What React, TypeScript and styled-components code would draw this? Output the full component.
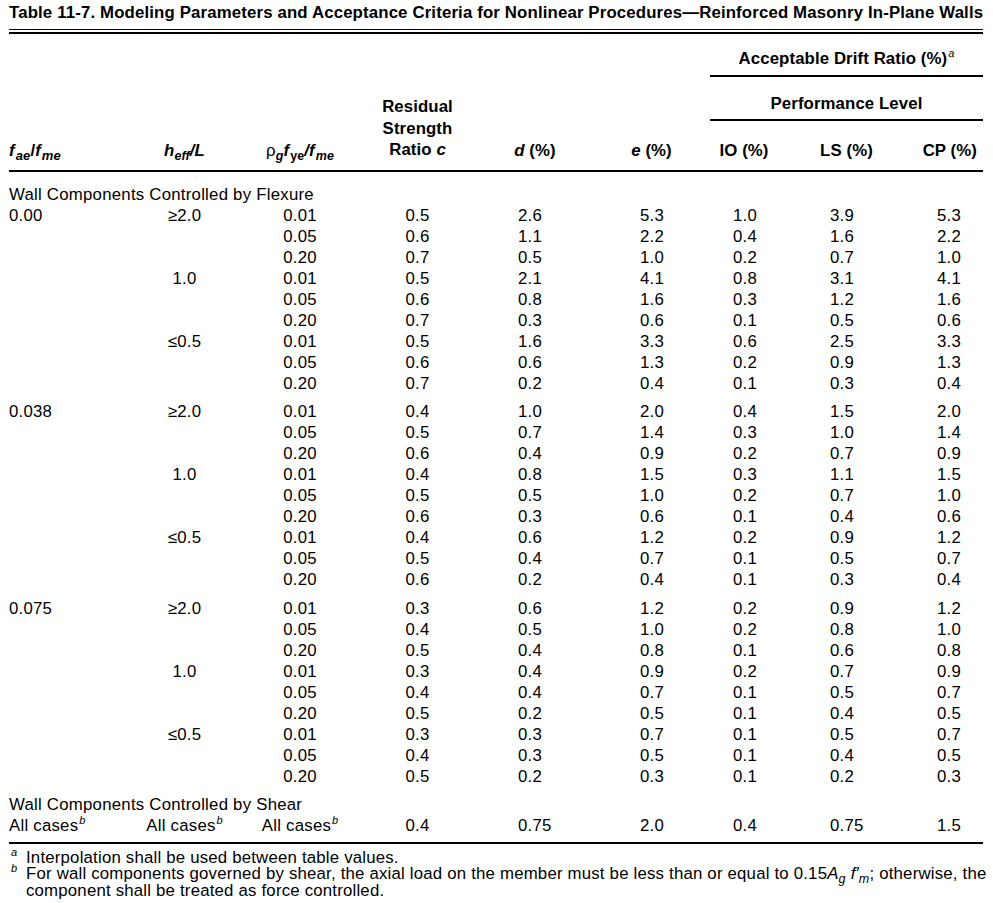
import React from 'react';
import styled, { createGlobalStyle } from 'styled-components';

const GlobalStyle = createGlobalStyle`
  html, body { margin: 0; padding: 0; background: #fff; }
  body { font-family: 'Liberation Sans', Arial, Helvetica, sans-serif; color: #000; }
`;

const COLS = '111px 129px 102px 133px 102px 131px 54px 151px 61px';
const FS = '16.8px';

type Align = 'left' | 'center' | 'right';
const DATA_ALIGN: { align: Align; pad: number }[] = [
  { align: 'left', pad: 0 },
  { align: 'center', pad: 0 },
  { align: 'center', pad: 0 },
  { align: 'center', pad: 0 },
  { align: 'left', pad: 34 },
  { align: 'left', pad: 54 },
  { align: 'left', pad: 16 },
  { align: 'left', pad: 59 },
  { align: 'left', pad: 15 },
];

const Page = styled.div`
  width: 974px;
  margin-left: 9px;
  font-size: ${FS};
  letter-spacing: 0.24px;
`;

const Title = styled.h1`
  margin: 0;
  font-size: ${FS};
  font-weight: bold;
  line-height: 26px;
  letter-spacing: 0.15px;
  white-space: nowrap;
`;

const DoubleRule = styled.div`
  margin-top: 3px;
  height: 2px;
  border-top: 1px solid #000;
  border-bottom: 2px solid #000;
`;

const HeaderGrid = styled.div`
  display: grid;
  grid-template-columns: ${COLS};
  grid-template-rows: auto auto;
  font-weight: bold;
  line-height: 21px;
  letter-spacing: 0.1px;
  border-bottom: 2px solid #000;
  padding-bottom: 9.5px;
`;

const ColLabel = styled.div<{ $col: number; $align?: Align; $padR?: number }>`
  grid-column: ${(p) => p.$col};
  grid-row: ${(p) => (p.$col >= 7 ? '2' : '1 / 3')};
  align-self: end;
  text-align: ${(p) => p.$align ?? 'center'};
  padding-right: ${(p) => p.$padR ?? 0}px;
  white-space: nowrap;
`;

const StackLabel = styled(ColLabel)`
  line-height: 21.5px;
`;

const GroupHead = styled.div`
  grid-column: 7 / 10;
  grid-row: 1;
  margin-left: -7px;
  padding-top: 13.5px;
  padding-bottom: 18.5px;
  display: flex;
  flex-direction: column;
  text-align: center;
`;

const GroupRule = styled.div<{ $top: number }>`
  height: 2px;
  background: #000;
  margin-top: ${(p) => p.$top}px;
`;

const GroupTitle = styled.div<{ $top?: number }>`
  margin-top: ${(p) => p.$top ?? 0}px;
  line-height: 21px;
`;

const Body = styled.div`
  padding-top: 11.5px;
  border-bottom: 2px solid #000;
  padding-bottom: 6px;
`;

const SectionLabel = styled.div<{ $gap?: number }>`
  margin-top: ${(p) => p.$gap ?? 0}px;
  line-height: 21px;
  height: 21px;
  white-space: nowrap;
`;

const Row = styled.div<{ $gap?: number }>`
  display: grid;
  grid-template-columns: ${COLS};
  height: 21px;
  line-height: 21px;
  margin-top: ${(p) => p.$gap ?? 0}px;
`;

const Cell = styled.div<{ $align: Align; $pad: number }>`
  text-align: ${(p) => p.$align};
  padding-left: ${(p) => p.$pad}px;
  white-space: nowrap;
`;

const Sub = styled.sub<{ $italic?: boolean; $size?: number }>`
  font-size: ${(p) => p.$size ?? 12.5}px;
  vertical-align: -4px;
  line-height: 0;
  font-style: ${(p) => (p.$italic ? 'italic' : 'normal')};
`;

const Sup = styled.sup`
  font-size: 11px;
  vertical-align: 7px;
  line-height: 0;
  font-style: italic;
  font-weight: normal;
  letter-spacing: 0;
  margin-left: 1px;
`;

const I = styled.i<{ $gap?: number }>`
  font-style: italic;
  margin-right: ${(p) => p.$gap ?? 0}px;
`;

const Rho = styled.span`
  font-weight: normal;
`;

const Notes = styled.div`
  margin-top: 5.5px;
  line-height: 16.5px;
`;

const Note = styled.div`
  display: grid;
  grid-template-columns: 17px 1fr;
`;

const NoteMark = styled.span`
  font-style: italic;
  font-size: 11px;
  line-height: 11px;
  padding-left: 2px;
  margin-top: -3px;
`;

const NoteText = styled.span`
  white-space: nowrap;
  letter-spacing: 0.2px;
`;

type Group = { h: string; rows: string[][] };
type Block = { fae: string; groups: Group[] };

const DATA: Block[] = [
  {
    fae: '0.00',
    groups: [
      { h: '≥2.0', rows: [
        ['0.01', '0.5', '2.6', '5.3', '1.0', '3.9', '5.3'],
        ['0.05', '0.6', '1.1', '2.2', '0.4', '1.6', '2.2'],
        ['0.20', '0.7', '0.5', '1.0', '0.2', '0.7', '1.0'],
      ] },
      { h: '1.0', rows: [
        ['0.01', '0.5', '2.1', '4.1', '0.8', '3.1', '4.1'],
        ['0.05', '0.6', '0.8', '1.6', '0.3', '1.2', '1.6'],
        ['0.20', '0.7', '0.3', '0.6', '0.1', '0.5', '0.6'],
      ] },
      { h: '≤0.5', rows: [
        ['0.01', '0.5', '1.6', '3.3', '0.6', '2.5', '3.3'],
        ['0.05', '0.6', '0.6', '1.3', '0.2', '0.9', '1.3'],
        ['0.20', '0.7', '0.2', '0.4', '0.1', '0.3', '0.4'],
      ] },
    ],
  },
  {
    fae: '0.038',
    groups: [
      { h: '≥2.0', rows: [
        ['0.01', '0.4', '1.0', '2.0', '0.4', '1.5', '2.0'],
        ['0.05', '0.5', '0.7', '1.4', '0.3', '1.0', '1.4'],
        ['0.20', '0.6', '0.4', '0.9', '0.2', '0.7', '0.9'],
      ] },
      { h: '1.0', rows: [
        ['0.01', '0.4', '0.8', '1.5', '0.3', '1.1', '1.5'],
        ['0.05', '0.5', '0.5', '1.0', '0.2', '0.7', '1.0'],
        ['0.20', '0.6', '0.3', '0.6', '0.1', '0.4', '0.6'],
      ] },
      { h: '≤0.5', rows: [
        ['0.01', '0.4', '0.6', '1.2', '0.2', '0.9', '1.2'],
        ['0.05', '0.5', '0.4', '0.7', '0.1', '0.5', '0.7'],
        ['0.20', '0.6', '0.2', '0.4', '0.1', '0.3', '0.4'],
      ] },
    ],
  },
  {
    fae: '0.075',
    groups: [
      { h: '≥2.0', rows: [
        ['0.01', '0.3', '0.6', '1.2', '0.2', '0.9', '1.2'],
        ['0.05', '0.4', '0.5', '1.0', '0.2', '0.8', '1.0'],
        ['0.20', '0.5', '0.4', '0.8', '0.1', '0.6', '0.8'],
      ] },
      { h: '1.0', rows: [
        ['0.01', '0.3', '0.4', '0.9', '0.2', '0.7', '0.9'],
        ['0.05', '0.4', '0.4', '0.7', '0.1', '0.5', '0.7'],
        ['0.20', '0.5', '0.2', '0.5', '0.1', '0.4', '0.5'],
      ] },
      { h: '≤0.5', rows: [
        ['0.01', '0.3', '0.3', '0.7', '0.1', '0.5', '0.7'],
        ['0.05', '0.4', '0.3', '0.5', '0.1', '0.4', '0.5'],
        ['0.20', '0.5', '0.2', '0.3', '0.1', '0.2', '0.3'],
      ] },
    ],
  },
];

const GROUP_GAP = 7.5;

const renderCells = (cells: React.ReactNode[]) =>
  cells.map((c, i) => (
    <Cell key={i} $align={DATA_ALIGN[i].align} $pad={DATA_ALIGN[i].pad}>
      {c}
    </Cell>
  ));

const AllCases = () => (
  <>
    All cases<Sup>b</Sup>
  </>
);

export default function App() {
  return (
    <>
      <GlobalStyle />
      <Page>
        <Title>
          Table 11-7. Modeling Parameters and Acceptance Criteria for Nonlinear Procedures—Reinforced Masonry In-Plane Walls
        </Title>
        <DoubleRule />
        <HeaderGrid>
          <ColLabel $col={1} $align="left">
            <I $gap={1}>f</I>
            <Sub $italic $size={13}>ae</Sub>/<I $gap={1}>f</I>
            <Sub $italic $size={13}>me</Sub>
          </ColLabel>
          <ColLabel $col={2}>
            <I>h</I>
            <Sub $italic>eff</Sub>
            <I>/L</I>
          </ColLabel>
          <ColLabel $col={3}>
            <Rho>ρ</Rho>
            <Sub $italic>g</Sub>
            <I $gap={1}>f</I>
            <Sub>ye</Sub>
            <I $gap={1}>/f</I>
            <Sub $italic>me</Sub>
          </ColLabel>
          <StackLabel $col={4}>
            Residual
            <br />
            Strength
            <br />
            Ratio <I>c</I>
          </StackLabel>
          <ColLabel $col={5}>
            <I>d</I> (%)
          </ColLabel>
          <ColLabel $col={6}>
            <I>e</I> (%)
          </ColLabel>
          <GroupHead>
            <GroupTitle>
              Acceptable Drift Ratio (%)<Sup>a</Sup>
            </GroupTitle>
            <GroupRule $top={6.5} />
            <GroupTitle $top={15.5}>Performance Level</GroupTitle>
            <GroupRule $top={5.5} />
          </GroupHead>
          <ColLabel $col={7}>IO (%)</ColLabel>
          <ColLabel $col={8}>LS (%)</ColLabel>
          <ColLabel $col={9} $align="right" $padR={6}>
            CP (%)
          </ColLabel>
        </HeaderGrid>
        <Body>
          <SectionLabel>Wall Components Controlled by Flexure</SectionLabel>
          {DATA.map((block, bi) =>
            block.groups.map((g, gi) =>
              g.rows.map((r, ri) => (
                <Row
                  key={`${bi}-${gi}-${ri}`}
                  $gap={bi > 0 && gi === 0 && ri === 0 ? GROUP_GAP : 0}
                >
                  {renderCells([
                    gi === 0 && ri === 0 ? block.fae : '',
                    ri === 0 ? g.h : '',
                    ...r,
                  ])}
                </Row>
              ))
            )
          )}
          <SectionLabel $gap={GROUP_GAP}>Wall Components Controlled by Shear</SectionLabel>
          <Row>
            {renderCells([
              <AllCases key="a" />,
              <AllCases key="b" />,
              <AllCases key="c" />,
              '0.4',
              '0.75',
              '2.0',
              '0.4',
              '0.75',
              '1.5',
            ])}
          </Row>
        </Body>
        <Notes>
          <Note>
            <NoteMark>a</NoteMark>
            <NoteText>Interpolation shall be used between table values.</NoteText>
          </Note>
          <Note>
            <NoteMark>b</NoteMark>
            <NoteText>
              For wall components governed by shear, the axial load on the member must be less than or equal to 0.15
              <I>A</I>
              <Sub $italic>g</Sub> <I>f′</I>
              <Sub $italic>m</Sub>; otherwise, the
              <br />
              component shall be treated as force controlled.
            </NoteText>
          </Note>
        </Notes>
      </Page>
    </>
  );
}
